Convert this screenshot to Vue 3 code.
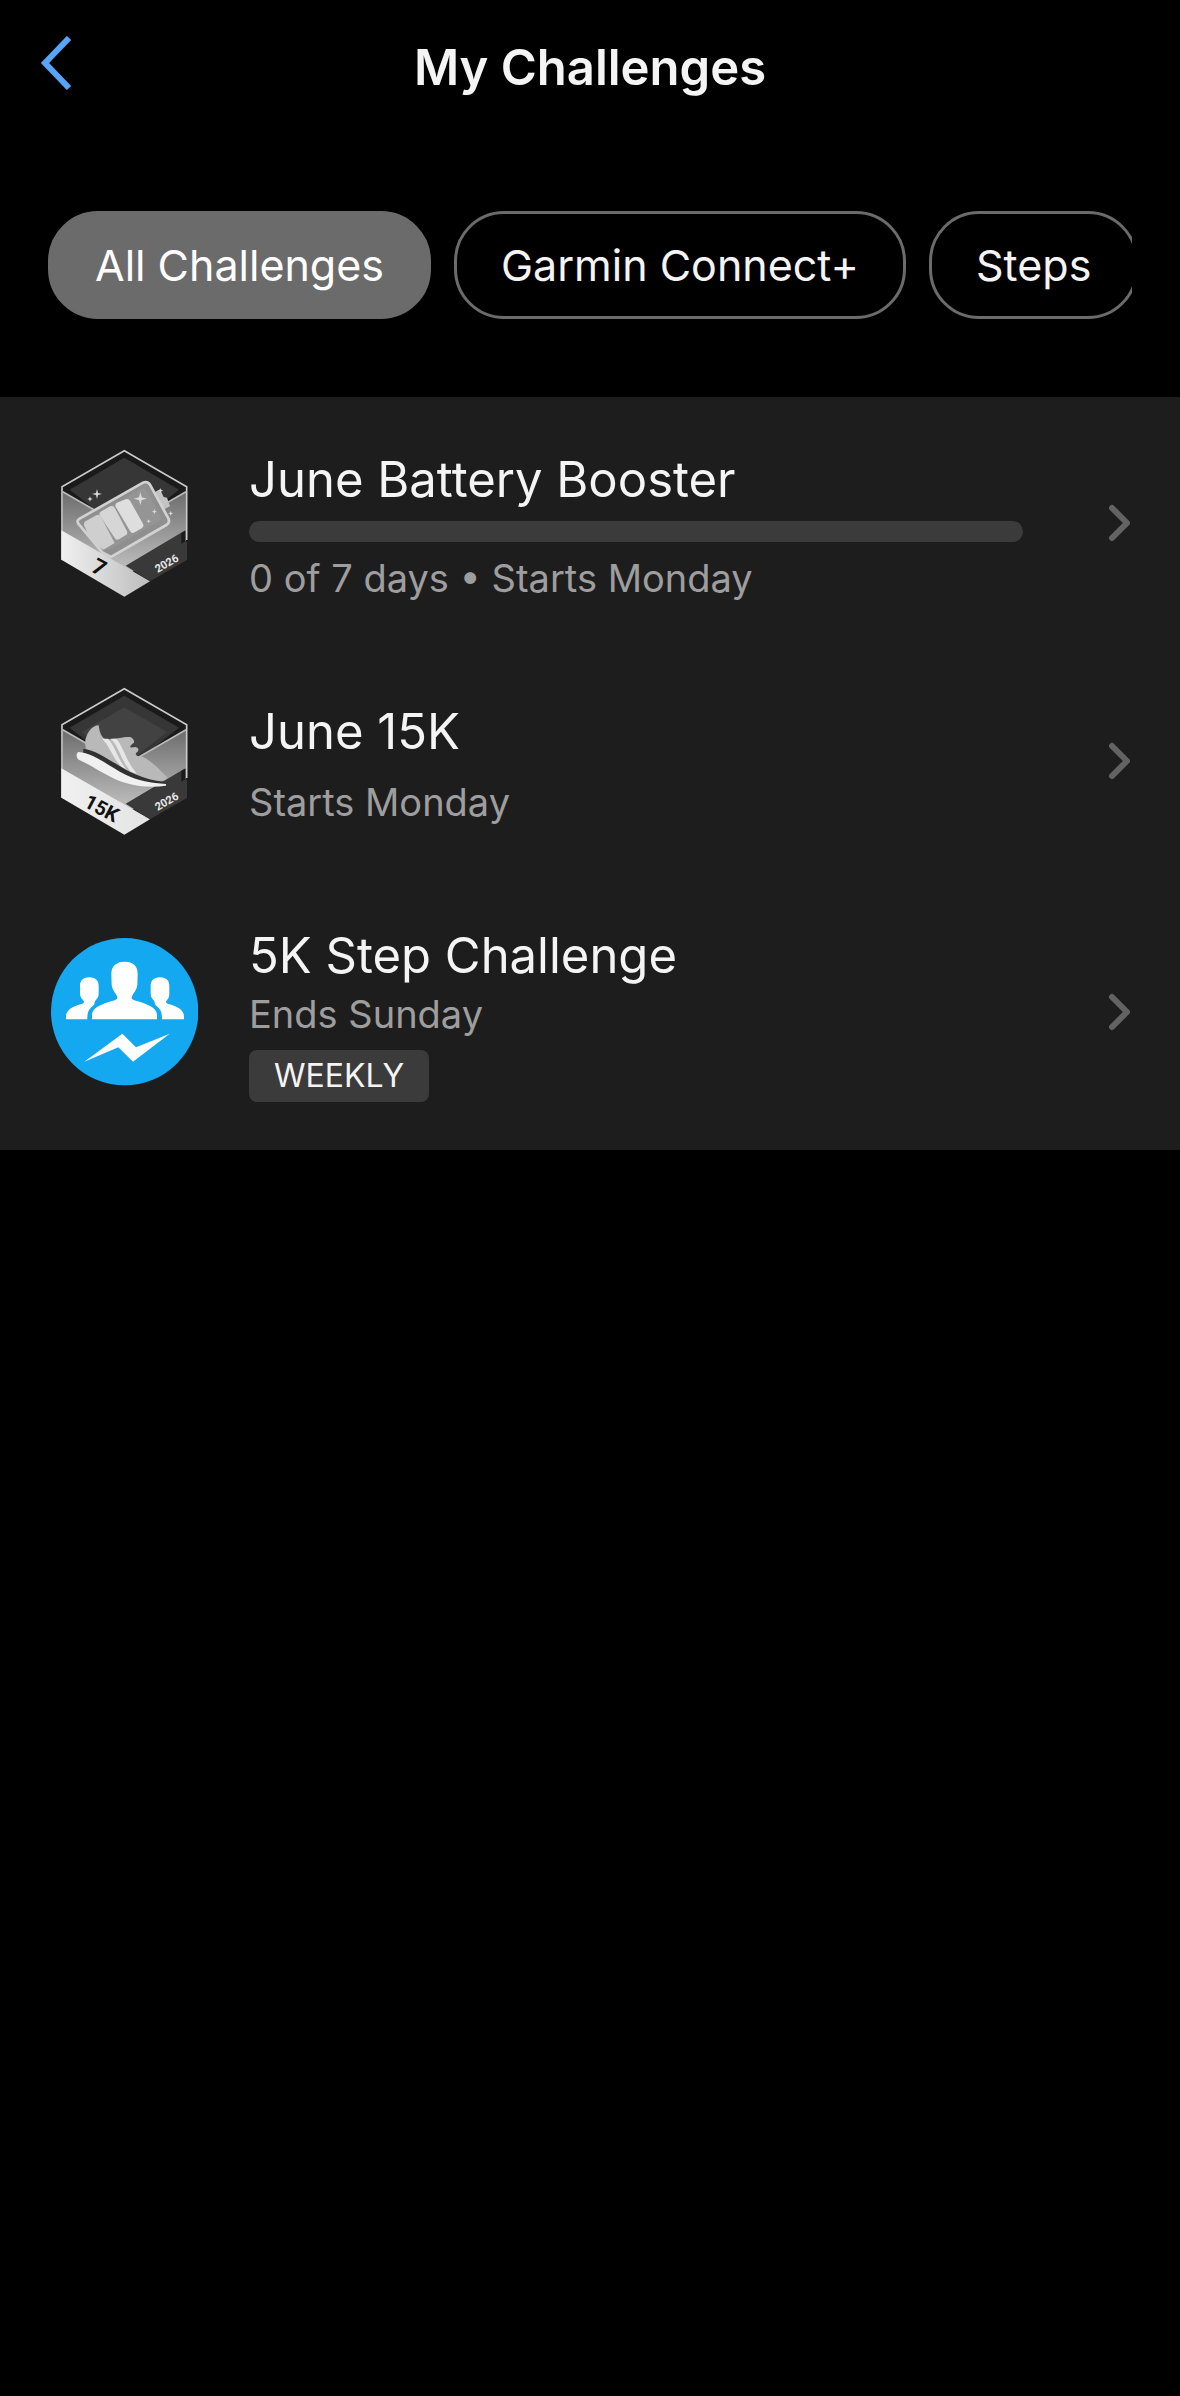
<template>
  <div class="screen">
    <header class="topbar">
      <button class="back" type="button" aria-label="Back">
        <svg viewBox="0 0 32 54" fill="none">
          <path d="M29 2 5 27l24 25" stroke="#56a5f7" stroke-width="6" />
        </svg>
      </button>
      <h1 class="title">My Challenges</h1>
    </header>

    <nav class="filters">
      <button
        v-for="filter in filters"
        :key="filter"
        type="button"
        class="chip"
        :class="{ active: filter === activeFilter }"
        @click="activeFilter = filter"
      >
        {{ filter }}
      </button>
    </nav>

    <ul class="list">
      <li v-for="item in challenges" :key="item.name">
        <a href="#" class="row">
          <svg v-if="item.icon === 'steps'" class="icon" viewBox="30 52 444 444">
            <circle cx="254" cy="273" r="221" fill="#13a8ef" />
            <g fill="#fff">
              <path d="M254 123c27 0 40 15 39 39l-1 31c-2 16-11 22-16 34-4 9 3 11 12 13 29 8 63 20 63 42v14H156v-14c0-22 34-34 63-42 9-2 16-4 12-13-5-12-14-18-16-34l-1-31c-1-24 13-39 40-39Z" />
              <path d="M148 170c20 0 28 11 28 27v21c0 12-5 17-10 22-4 5-1 8-4 12-14 13-20 17-20 44H78v-9c0-18 19-29 43-36 12-3 13-7 8-13-5-5-9-10-9-20v-21c0-16 8-27 28-27Z" />
              <path d="M360 170c-20 0-28 11-28 27v21c0 12 5 17 10 22 4 5 1 8 4 12 14 13 20 17 20 44h66v-9c0-18-19-29-43-36-12-3-13-7-8-13 5-5 7-10 7-20v-21c0-16-8-27-28-27Z" />
              <path d="m133 423 114-84 41 41 101-41-110 84-44-43Z" />
            </g>
          </svg>

          <svg v-else class="icon" viewBox="30 58 444 444">
            <defs>
              <linearGradient :id="item.icon + '-wall'" x1="0" y1="0" x2="0" y2="1">
                <stop offset="0" stop-color="#6d6d6d" />
                <stop offset="1" stop-color="#c6c6c6" />
              </linearGradient>
              <linearGradient :id="item.icon + '-band'" x1="0" y1="0" x2="1" y2="0">
                <stop offset="0" stop-color="#f0f0f0" />
                <stop offset="1" :stop-color="item.icon === 'battery' ? '#bdbdbd' : '#e4e4e4'" />
              </linearGradient>
            </defs>
            <path d="m253 62 186 109v159l-186 110L66 390V171Z" fill="#1b1a1b" />
            <path d="m253 84 164 96-164 130L89 180Z" fill="#373637" />
            <path v-if="item.icon === 'shoe'" d="m253 119 128 74-128 100-128-100Z" fill="#434243" />
            <path d="m68 188 186 105 184-105v146L253 440 68 334Z" :fill="`url(#${item.icon}-wall)`" />
            <path d="m68 186 186 107 184-107" fill="none" stroke="#bcbcbc" stroke-width="5" />
            <path d="M66 390V171L253 63l187 108v160" fill="none" stroke="#c9c9c9" stroke-width="5" />

            <g v-if="item.icon === 'battery'">
              <path d="m339 190 21-11 11 23 10 2 9 26-22 11Z" fill="#c3c3c3" />
              <path d="m119 267 190-108q13-6 21 6l55 101q6 13-6 20L213 382l-26-14-72-86q-6-9 4-15Z" fill="#8f8f8f" stroke="#d2d2d2" stroke-width="8" />
              <path d="m139 271 164-93q11-5 17 5l42 76q5 10-4 15l-146 83-22 6-59-80q-2-8 8-12Z" fill="#969596" />
              <path d="m137 275 32-18q9-4 14 4l41 79-34 20q-28-18-44-42l-14-31q-2-8 5-12Z" fill="#cfcfcf" />
              <path d="m184 245 26-15q9-4 14 4l37 71q3 8-4 12l-20 12q-9 4-13-4l-45-68q-3-8 5-12Z" fill="#d6d6d6" />
              <path d="m231 219 26-10q9-3 14 6l38 67q4 9-4 14l-21 12q-9 5-14-4l-43-73q-3-8 4-12Z" fill="#dedede" />
              <g fill="#dcdcdc">
                <path d="m171 178 3 12 12 3-12 3-3 12-3-12-12-3 12-3Z" />
                <path d="m150 200 2 6 6 2-6 2-2 6-2-6-6-2 6-2Z" />
                <path d="m301 187 4 16 16 4-16 4-4 16-4-16-16-4 16-4Z" />
                <path d="m343 238 2 6 6 2-6 2-2 6-2-6-6-2 6-2Z" />
                <path d="m392 243 2 6 6 2-6 2-2 6-2-6-6-2 6-2Z" />
                <path d="m362 175 2 6 6 2-6 2-2 6-2-6-6-2 6-2Z" />
                <path d="m326 269 2 4 6 1-6 2-2 5-2-5-6-2 6-1Z" />
              </g>
            </g>

            <path d="m64 302 266 153-77 46L64 390Z" :fill="`url(#${item.icon}-band)`" />
            <path d="m257 408 179-106v32l5 3v54l-111 64Z" fill="#3a393a" />
            <path d="m424 310 12-7v32l-12 7Z" fill="#1b1a1b" />

            <g v-if="item.icon === 'shoe'">
              <path d="M137 238c-5-17 3-42 18-56 9-7 18-11 21-9 1 14 7 34 17 40 24 6 62-8 80-4 6 4 11 10 9 16-6 4-12 9-12 14 7 2 16-4 22 1 6 5 3 12-3 15-4 3-1 9 6 11 10 0 12 1 22 6 28 18 50 42 66 58q-8 10-32 10c-82-9-130-65-214-95Z" fill="#b9b9b9" />
              <path d="M186 213h18c22 22 30 67 62 99l-17-9c-30-29-38-66-63-90Z" fill="#e6e6e6" />
              <path d="M212 213h17c21 23 29 68 62 105l-19-6c-30-35-34-75-60-99Z" fill="#e6e6e6" />
              <path d="M130 243C200 252 262 335 373 342l5 8c-79 2-111-19-151-31-36-21-60-49-97-60Z" fill="#323132" />
              <path d="M115 253c47 3 92 43 139 67 39 20 81 27 124 29v5c-58 9-117-3-155-21-40-18-76-44-107-57-8-6-8-19-1-23Z" fill="#f0f0f0" />
            </g>

            <text class="goal" :x="item.goal.x" :y="item.goal.y" :font-size="item.goal.size" :transform="`rotate(28 ${item.goal.x} ${item.goal.y})`">{{ item.goal.label }}</text>
            <text class="year" x="353" y="430" transform="rotate(-30 353 430)">2026</text>
          </svg>

          <div class="info">
            <h2 class="name">{{ item.name }}</h2>
            <div v-if="item.total" class="progress">
              <div class="progress-fill" :style="{ width: (item.done / item.total) * 100 + '%' }"></div>
            </div>
            <p class="status" :class="{ tight: item.tag }">{{ item.status }}</p>
            <span v-if="item.tag" class="tag">{{ item.tag }}</span>
          </div>

          <svg class="arrow" viewBox="0 0 22 38" fill="none">
            <path d="m4 4 15 15L4 34" stroke="#646364" stroke-width="6" stroke-linecap="round" stroke-linejoin="round" />
          </svg>
        </a>
      </li>
    </ul>
  </div>
</template>

<script setup>
import { ref } from 'vue'

const filters = ['All Challenges', 'Garmin Connect+', 'Steps']
const activeFilter = ref('All Challenges')

const challenges = [
  {
    name: 'June Battery Booster',
    icon: 'battery',
    goal: { label: '7', x: 150, y: 424, size: 66 },
    done: 0,
    total: 7,
    status: '0 of 7 days • Starts Monday',
  },
  {
    name: 'June 15K',
    icon: 'shoe',
    goal: { label: '15K', x: 128, y: 415, size: 60 },
    status: 'Starts Monday',
  },
  {
    name: '5K Step Challenge',
    icon: 'steps',
    status: 'Ends Sunday',
    tag: 'WEEKLY',
  },
]
</script>

<style>
body {
  background: #000;
}
</style>

<style scoped>
.screen {
  min-height: 100vh;
  background: #000;
  color: #f4f4f4;
  font-family: Inter, 'Liberation Sans', sans-serif;
}

.topbar {
  display: grid;
  grid-template-columns: 32px 1fr 32px;
  align-items: start;
  padding: 36px 40px 0;
}

.back {
  padding: 0;
  border: 0;
  background: none;
  cursor: pointer;
}

.back svg {
  display: block;
  width: 32px;
  height: 54px;
}

.title {
  margin: 0;
  font-size: 49px;
  line-height: 64px;
  font-weight: 600;
  text-align: center;
}

.filters {
  display: flex;
  gap: 23px;
  margin: 111px 48px 78px;
  overflow-x: auto;
  scrollbar-width: none;
}

.chip {
  flex: none;
  box-sizing: border-box;
  height: 108px;
  padding: 0 44px;
  border: 3px solid #6c6b6c;
  border-radius: 50px;
  background: none;
  color: inherit;
  font-family: inherit;
  font-size: 43px;
  white-space: nowrap;
  cursor: pointer;
}

.chip.active {
  background: #6c6b6c;
  color: #fff;
}

.list {
  margin: 0;
  padding: 0;
  list-style: none;
  background: #1e1d1e;
}

.row {
  display: flex;
  align-items: center;
  padding: 0 50px;
  color: inherit;
  text-decoration: none;
}

.icon {
  flex: none;
  width: 148px;
  height: 148px;
}

.goal,
.year {
  font-family: Roboto, 'Liberation Sans', sans-serif;
  font-weight: 700;
}

.goal {
  fill: #111;
}

.year {
  fill: #e6e6e6;
  font-size: 33px;
}

.info {
  flex: 1;
  margin: 0 85px 0 51px;
  padding: 49px 0 48px;
}

.name {
  margin: 0;
  font-size: 49px;
  line-height: 68px;
  font-weight: 400;
}

.progress {
  height: 21px;
  margin-top: 7px;
  border-radius: 11px;
  background: #3c3b3c;
  overflow: hidden;
}

.progress-fill {
  height: 100%;
  background: #13a8ef;
}

.status {
  margin: 13px 0 0;
  color: #9f9e9f;
  font-size: 38px;
  line-height: 46px;
}

.status.tight {
  margin-top: 1px;
}

.tag {
  display: block;
  width: fit-content;
  margin-top: 13px;
  padding: 0 25px;
  border-radius: 8px;
  background: #3c3b3c;
  font-size: 32px;
  line-height: 52px;
}

.arrow {
  flex: none;
  width: 22px;
  height: 38px;
}
</style>
